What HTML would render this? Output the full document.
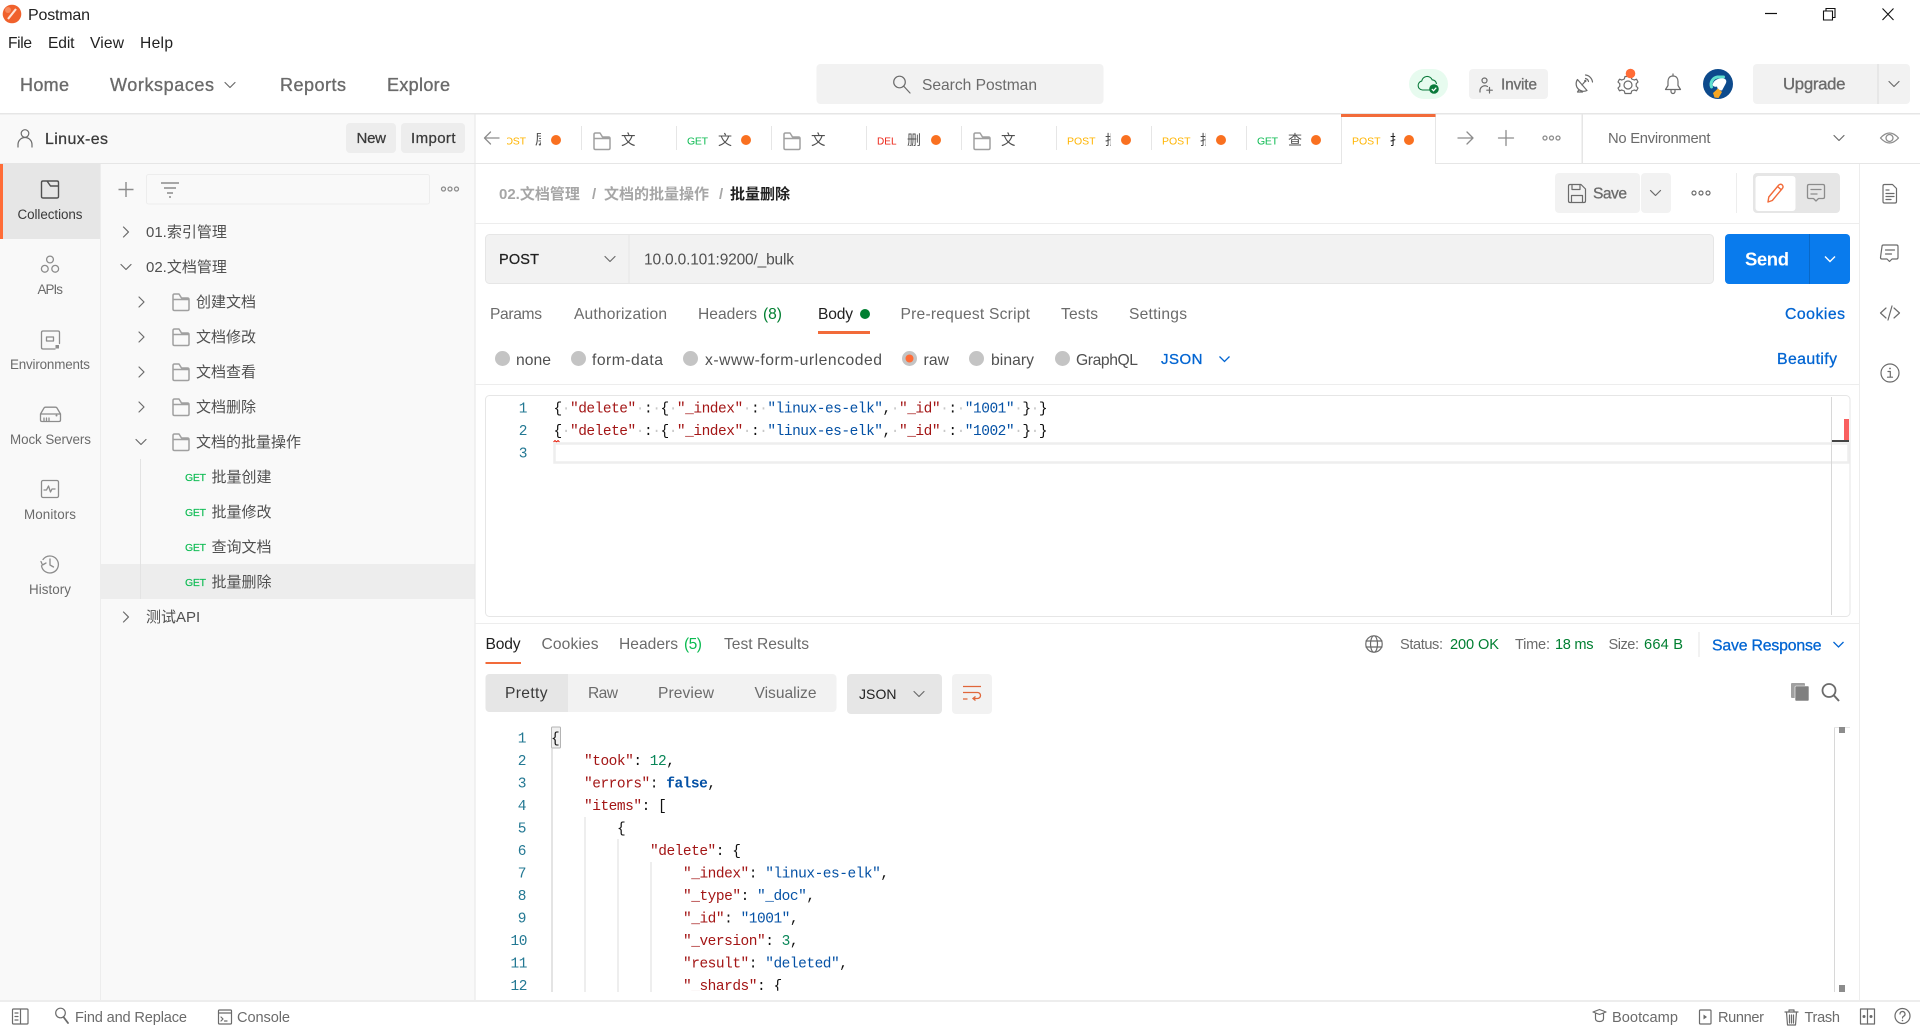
<!DOCTYPE html>
<html lang="zh"><head><meta charset="utf-8"><title>Postman</title>
<style>
html,body{margin:0;padding:0;background:#fff;width:1920px;height:1030px;overflow:hidden}
svg{display:block}
text{font-family:"Liberation Sans","Noto Sans CJK SC",sans-serif;font-size:15px;fill:#505050}
.g{fill:#6b6b6b;font-size:15.600px}.d{fill:#212121;font-size:15.600px}.r{font-size:15.700px}
.l{fill:#a6a6a6;font-weight:700}.lb{fill:#212121;font-weight:700}
.nav{font-size:18px;fill:#6b6b6b;stroke:#6b6b6b;stroke-width:.35}
.sn{font-size:13.400px;fill:#6b6b6b}
.st{font-size:14.600px;fill:#6b6b6b}
.bd{font-size:16px;fill:#212121;stroke:#212121;stroke-width:.25}
.blue{fill:#0265d2;stroke:#0265d2;stroke-width:.3;font-size:15.800px}
.gn{fill:#007f31;font-size:15.600px}.gl{fill:#0cbb52;font-size:15.600px}
.get{font-size:10.500px;fill:#0cbb52;stroke:#0cbb52;stroke-width:.15}
.pst{font-size:10.500px;fill:#ffb400}.gt{font-size:10.500px;fill:#0cbb52}.dl{font-size:10px;fill:#eb2013}
.m{font-family:"Liberation Mono","Noto Sans CJK SC",monospace;font-size:14.500px;letter-spacing:-.48px;fill:#111}
.k{fill:#a31515}.v{fill:#0451a5}.w{fill:#c8c8c8}.n{fill:#098658}.b{fill:#0451a5;font-weight:700}
.ln{font-family:"Liberation Mono",monospace;font-size:14.500px;letter-spacing:-.48px;fill:#237893;text-anchor:end}
.i{fill:none;stroke:#6b6b6b;stroke-width:1.200;stroke-linecap:round;stroke-linejoin:round}
.il{fill:none;stroke:#8c8c8c;stroke-width:1.300;stroke-linecap:round;stroke-linejoin:round}
.f{fill:none;stroke:#a0a0a0;stroke-width:1.500;stroke-linejoin:round}
</style></head><body>
<svg xmlns="http://www.w3.org/2000/svg" width="1920" height="1030" viewBox="0 0 1920 1030">
<defs>
<symbol id="folder" viewBox="0 0 18 18" overflow="visible"><path d="M1 2.500q0-1.500 1.500-1.500h4.500l2.500 4h6q1.500 0 1.500 1.500v9.500q0 1.500-1.500 1.500h-13q-1.500 0-1.500-1.500zM1 6.500h16" class="f"/></symbol>
</defs>
<rect width="1920" height="1030" fill="#fff"/>

<!-- title bar -->
<circle cx="12" cy="14" r="9.300" fill="#f0612c"/><path d="M8 19l8-10" stroke="#ffe3d6" stroke-width="2.200" fill="none"/><circle cx="8" cy="10" r="3" fill="#f78a5e"/>
<text x="28" y="20" textLength="62" style="fill:#222;font-size:16px">Postman</text>
<text x="8" y="48" textLength="24" class="d">File</text>
<text x="48" y="48" textLength="26.500" class="d">Edit</text>
<text x="90" y="48" textLength="34" class="d">View</text>
<text x="140" y="48" textLength="33" class="d">Help</text>
<path d="M1765 13.500h12" stroke="#111" stroke-width="1.200"/>
<path d="M1823.500 11h9v9h-9zM1826 11V8.500h9v9h-2.500" fill="none" stroke="#111" stroke-width="1.100"/>
<path d="M1882.500 8.500l11 11.500M1893.500 8.500l-11 11.500" stroke="#111" stroke-width="1.100"/>

<!-- header nav -->
<text x="20" y="91" textLength="49" class="nav">Home</text>
<text x="110" y="91" textLength="104" class="nav">Workspaces</text>
<path d="M225 82.500l5 5 5-5" class="i"/>
<text x="280" y="91" textLength="66" class="nav">Reports</text>
<text x="387" y="91" textLength="63" class="nav">Explore</text>
<rect x="816.500" y="64" width="287" height="40" rx="4" fill="#f2f2f2"/>
<circle cx="899.500" cy="82" r="5.800" class="i"/><path d="M904 86.500l6 6.500" class="i"/>
<text x="922" y="89.800" textLength="115" class="g">Search Postman</text>

<rect x="1409" y="69" width="39" height="30" rx="15" fill="#e7fbef"/>
<path d="M1432 90h-9.500a4.500 4.500 0 0 1-.8-8.900 5.500 5.500 0 0 1 10.500-1.300 4.500 4.500 0 0 1 4.300 4.200" fill="none" stroke="#0a7a3b" stroke-width="1.100"/>
<circle cx="1434" cy="89" r="4.800" fill="#0a7a3b"/><path d="M1431.800 89l1.700 1.700 2.800-3" stroke="#fff" stroke-width="1.200" fill="none"/>
<rect x="1469" y="69" width="79" height="30" rx="4" fill="#f2f2f2"/>
<circle cx="1484.500" cy="80.500" r="2.500" class="i"/><path d="M1480 92v-2a5 5 0 0 1 7.500-3.500M1489.500 87.500v5.500M1486.800 90.200h5.500" class="i"/>
<text x="1501" y="89.300" textLength="36" class="g" style="stroke:#6b6b6b;stroke-width:.3">Invite</text>
<path d="M1577.500 79.500a7.500 7.500 0 0 0 9.500 11zM1582 85l3-3.500M1578.500 90.500l-1 1.500h5" class="i"/><path d="M1585.500 78.500a4 4 0 0 1 3 3M1585.500 75a8 8 0 0 1 7 7" class="i"/><circle cx="1585.300" cy="81" r="1.200" fill="#6b6b6b"/>
<path d="M1625 76.500l-.7 2.500-2.500 1-2.300-.8-1.500 2.800 1.800 1.700v2.600l-1.800 1.700 1.500 2.800 2.300-.8 2.500 1 .7 2.500h6l.7-2.500 2.500-1 2.300.8 1.500-2.800-1.800-1.700v-2.600l1.800-1.700-1.500-2.800-2.300.8-2.500-1-.7-2.500z" class="i"/><circle cx="1628" cy="85" r="4" class="i"/>
<circle cx="1630.500" cy="73.500" r="4.800" fill="#ff6c37"/>
<path d="M1673 76c3.500 0 5 2.500 5 5.500v4l2.500 4h-15l2.500-4v-4c0-3 1.500-5.500 5-5.500zM1673 76v-2M1671 90v1.500a2 2 0 0 0 4 0V90" class="i"/>
<circle cx="1718" cy="84" r="15" fill="#0d4a8c"/>
<path d="M1711.500 87a7.500 7.500 0 0 1 6-10h6" fill="none" stroke="#5fe0cf" stroke-width="3" stroke-linecap="round"/><path d="M1712.500 85c1-5 6-7 11-6.500 3 .5 3.500 3 2 5.500l-3.500 6.500-4-.5-1-3.500q-3 1-4.500-1.500z" fill="#fff"/>
<path d="M1713 93l5-4.500 4 3.500-3.500 6-4-.5z" fill="#f6a623"/>
<rect x="1753" y="64" width="157" height="40" rx="4" fill="#f2f2f2"/><rect x="1877.500" y="64" width="1" height="40" fill="#dcdcdc"/>
<text x="1783" y="89.500" textLength="62.500" class="nav" style="font-size:16.800px">Upgrade</text>
<path d="M1889 81.500l5 5 5-5" class="i"/>

<!-- horizontal structure -->
<rect x="0" y="113" width="1920" height="1.500" fill="#e6e6e6"/>
<rect x="0" y="114.500" width="475" height="885.500" fill="#f9f9f9"/>
<rect x="0" y="163" width="1920" height="1" fill="#e6e6e6"/>
<rect x="100" y="164" width="1" height="836" fill="#ededed"/>
<rect x="474.500" y="114" width="1" height="886" fill="#e6e6e6"/>
<rect x="1859" y="164" width="1" height="836" fill="#ededed"/>

<!-- workspace header -->
<circle cx="25" cy="133.500" r="3.800" class="i"/><path d="M18 147v-2.500a7 7 0 0 1 14 0v2.500" class="i"/>
<text x="45" y="143.800" textLength="63" class="bd" style="fill:#3a3a3a;stroke:#3a3a3a">Linux-es</text>
<rect x="346" y="123" width="50" height="30" rx="4" fill="#ededed"/>
<text x="356.500" y="143" textLength="29.500" class="bd" style="font-size:15px;fill:#3a3a3a;stroke:#3a3a3a">New</text>
<rect x="401" y="123" width="64" height="30" rx="4" fill="#ededed"/>
<text x="411" y="143" textLength="44.500" class="bd" style="font-size:15px;fill:#3a3a3a;stroke:#3a3a3a">Import</text>

<!-- left nav -->
<rect x="0" y="164" width="100" height="75" fill="#e6e6e6"/><rect x="0" y="164" width="3" height="75" fill="#ff6c37"/>
<path d="M41.500 182.500q0-1.500 1.500-1.500h14q1.500 0 1.500 1.500v14q0 1.500-1.500 1.500h-14q-1.500 0-1.500-1.500zM47 181l3.500 5h8" fill="none" stroke="#505050" stroke-width="1.400" stroke-linejoin="round"/>
<text x="17.500" y="219" textLength="65" class="sn" style="fill:#3a3a3a">Collections</text>
<circle cx="50" cy="259.500" r="3.400" class="il"/><circle cx="44.800" cy="268.800" r="3.400" class="il"/><circle cx="55.200" cy="268.800" r="3.400" class="il"/>
<text x="37.500" y="294" textLength="25.500" class="sn">APIs</text>
<path d="M55 349h-12q-1.500 0-1.500-1.500v-15q0-1.500 1.500-1.500h15q1.500 0 1.500 1.500v11" class="il"/><rect x="46.500" y="337" width="7" height="4" class="il"/><rect x="55.500" y="345" width="3.500" height="3.500" fill="#8c8c8c"/>
<text x="10" y="369" textLength="80" class="sn">Environments</text>
<path d="M40.500 414v6q0 1.500 1.500 1.500h17q1.500 0 1.500-1.500v-6l-3.500-6q-.5-.8-1.500-.8h-10q-1 0-1.500.8zM40.500 414h20M44 421v-3M46.500 421v-3M49 421v-3" class="il"/><circle cx="56.500" cy="415.500" r="1" fill="#8c8c8c"/>
<text x="10" y="444" textLength="81" class="sn">Mock Servers</text>
<rect x="41.500" y="480.500" width="17" height="17" rx="1.500" class="il"/><path d="M44 490h2.500l2-4 2 6 1.500-3h3" class="il"/>
<text x="24" y="519" textLength="52" class="sn">Monitors</text>
<path d="M43 559.500a8.500 8.500 0 1 1-1.500 6.300M41 561.500l1.500 3.500 3.500-2M50 559v6l3.500 2" class="il"/>
<text x="29" y="594" textLength="42" class="sn">History</text>

<!-- collection toolbar -->
<path d="M126 182v15M118.500 189.500h15" stroke="#8c8c8c" stroke-width="1.400" fill="none"/>
<rect x="146.500" y="174.500" width="283" height="29.500" rx="2" fill="#f9f9f9" stroke="#ededed"/>
<path d="M161 183h18M164 188h12M167 193h6M169 197h2" stroke="#8c8c8c" stroke-width="1.400" fill="none"/>
<circle cx="443.500" cy="189" r="2" class="il"/><circle cx="450" cy="189" r="2" class="il"/><circle cx="456.500" cy="189" r="2" class="il"/>

<!-- tree -->
<path d="M123.500 227l5 5-5 5" class="i"/>
<text x="146" y="236.800">01.索引管理</text>
<path d="M121 264.500l5 5 5-5" class="i"/>
<text x="146" y="271.800">02.文档管理</text>
<path d="M139 297l5 5-5 5" class="i"/><use href="#folder" x="172" y="293" width="18" height="18"/><text x="196" y="306.800">创建文档</text>
<path d="M139 332l5 5-5 5" class="i"/><use href="#folder" x="172" y="328" width="18" height="18"/><text x="196" y="341.800">文档修改</text>
<path d="M139 367l5 5-5 5" class="i"/><use href="#folder" x="172" y="363" width="18" height="18"/><text x="196" y="376.800">文档查看</text>
<path d="M139 402l5 5-5 5" class="i"/><use href="#folder" x="172" y="398" width="18" height="18"/><text x="196" y="411.800">文档删除</text>
<path d="M136 439.500l5 5 5-5" class="i"/><use href="#folder" x="172" y="433" width="18" height="18"/><text x="196" y="446.800">文档的批量操作</text>
<rect x="100.500" y="564" width="374" height="35" fill="#ededed"/>
<rect x="140" y="459" width="1" height="140" fill="#e3e3e3"/>
<text x="185" y="481" textLength="21" class="get">GET</text><text x="211.500" y="481.800">批量创建</text>
<text x="185" y="516" textLength="21" class="get">GET</text><text x="211.500" y="516.800">批量修改</text>
<text x="185" y="551" textLength="21" class="get">GET</text><text x="211.500" y="551.800">查询文档</text>
<text x="185" y="586" textLength="21" class="get">GET</text><text x="211.500" y="586.800">批量删除</text>
<path d="M123.500 612l5 5-5 5" class="i"/>
<text x="146" y="621.800">测试API</text>

<!-- tab strip -->
<path d="M499 138h-14M490.500 132l-6 6 6 6" class="il"/>
<svg x="507" y="128" width="19" height="22" overflow="hidden"><text x="-9" y="16.500" textLength="28" class="pst">POST</text></svg>
<svg x="535" y="128" width="6" height="22" overflow="hidden"><text x="0" y="16.500" style="font-size:14px">层</text></svg>
<circle cx="556" cy="140" r="5" fill="#f97020"/>
<rect x="581" y="126" width="1" height="24" fill="#e6e6e6"/>
<use href="#folder" x="593" y="132" width="18" height="18"/><text x="621" y="145" style="font-size:14.500px">文</text>
<rect x="676" y="126" width="1" height="24" fill="#e6e6e6"/>
<text x="687" y="144.500" textLength="21" class="gt">GET</text><text x="718" y="145" style="font-size:14px">文</text><circle cx="746" cy="140" r="5" fill="#f97020"/>
<rect x="771" y="126" width="1" height="24" fill="#e6e6e6"/>
<use href="#folder" x="783" y="132" width="18" height="18"/><text x="811" y="145" style="font-size:14.500px">文</text>
<rect x="866" y="126" width="1" height="24" fill="#e6e6e6"/>
<text x="877" y="144.500" textLength="19.500" class="dl">DEL</text><text x="907" y="145" style="font-size:14px">删</text><circle cx="936" cy="140" r="5" fill="#f97020"/>
<rect x="961" y="126" width="1" height="24" fill="#e6e6e6"/>
<use href="#folder" x="973" y="132" width="18" height="18"/><text x="1001" y="145" style="font-size:14.500px">文</text>
<rect x="1056" y="126" width="1" height="24" fill="#e6e6e6"/>
<text x="1067" y="144.500" textLength="28.500" class="pst">POST</text>
<svg x="1105" y="128" width="6" height="22" overflow="hidden"><text x="0" y="17" style="font-size:14px">批</text></svg>
<circle cx="1126" cy="140" r="5" fill="#f97020"/>
<rect x="1151" y="126" width="1" height="24" fill="#e6e6e6"/>
<text x="1162" y="144.500" textLength="28.500" class="pst">POST</text>
<svg x="1200" y="128" width="6" height="22" overflow="hidden"><text x="0" y="17" style="font-size:14px">批</text></svg>
<circle cx="1221" cy="140" r="5" fill="#f97020"/>
<rect x="1246" y="126" width="1" height="24" fill="#e6e6e6"/>
<text x="1257" y="144.500" textLength="21" class="gt">GET</text><text x="1288" y="145" style="font-size:14px">查</text><circle cx="1316" cy="140" r="5" fill="#f97020"/>
<rect x="1341" y="114" width="95" height="50" fill="#fff"/><rect x="1341" y="114" width="1" height="50" fill="#e6e6e6"/><rect x="1435" y="114" width="1" height="50" fill="#e6e6e6"/><rect x="1341" y="114" width="94.500" height="3" fill="#f26b3a"/>
<text x="1352" y="144.500" textLength="28.500" class="pst">POST</text>
<svg x="1390" y="128" width="5.500" height="22" overflow="hidden"><text x="0" y="17" style="font-size:14px;fill:#212121">批</text></svg>
<circle cx="1409" cy="140" r="5" fill="#f97020"/>
<path d="M1458 138h15M1467 132l6 6-6 6" class="il"/>
<path d="M1506 130.500v15M1498.500 138h15" class="il"/>
<circle cx="1545" cy="138" r="2" class="il"/><circle cx="1551.500" cy="138" r="2" class="il"/><circle cx="1558" cy="138" r="2" class="il"/>
<rect x="1581.500" y="114" width="1.500" height="50" fill="#e6e6e6"/>
<text x="1608" y="143" textLength="102.500" class="g" style="font-size:14.800px">No Environment</text>
<path d="M1834 135.500l5 5 5-5" class="i"/>
<path d="M1880.500 138q9-10 18 0q-9 10-18 0z" class="il"/><circle cx="1889.500" cy="138" r="3.500" class="il"/>

<!-- breadcrumb -->
<text x="499" y="199" class="l">02.文档管理</text>
<text x="592" y="199" class="l">/</text>
<text x="604" y="199" class="l">文档的批量操作</text>
<text x="719" y="199" class="l">/</text>
<text x="730" y="199" class="lb">批量删除</text>
<rect x="475" y="223" width="1384" height="1" fill="#ededed"/>

<rect x="1555" y="173" width="85" height="40" rx="4" fill="#f2f2f2"/><rect x="1641" y="173" width="30" height="40" rx="4" fill="#f2f2f2"/>
<path d="M1568.500 186q0-1.500 1.500-1.500h11l4.500 4.500v12q0 1.500-1.500 1.500h-14q-1.500 0-1.500-1.500zM1572 184.500v5h8v-5M1571.500 202.500v-7h11v7" class="i"/>
<text x="1593" y="198.500" textLength="34" class="g" style="stroke:#6b6b6b;stroke-width:.3">Save</text>
<path d="M1650.500 190.500l5 5 5-5" class="i"/>
<circle cx="1694" cy="193" r="2" class="i"/><circle cx="1701" cy="193" r="2" class="i"/><circle cx="1708" cy="193" r="2" class="i"/>
<rect x="1736" y="173" width="1" height="40" fill="#ededed"/>
<rect x="1753" y="173" width="87" height="40" rx="4" fill="#e6e6e6"/><rect x="1755.500" y="176" width="40" height="35" rx="3" fill="#fff"/>
<path d="M1768 202l.8-5 10-12q2-1.500 3.500 0 1.500 2 0 3.500l-10 12zM1777.500 186.500l4 3.500" fill="none" stroke="#f26b3a" stroke-width="1.400" stroke-linejoin="round"/>
<path d="M1807.500 186q0-1.500 1.500-1.500h14q1.500 0 1.500 1.500v11q0 1.500-1.500 1.500h-4.500l-2.500 2.500-2.500-2.500h-4.500q-1.500 0-1.500-1.500zM1811 189.500h10M1811 194h6" class="il"/>

<!-- right rail -->
<path d="M1883 186q0-1.500 1.500-1.500h8l4 4v13q0 1.500-1.500 1.500h-10.500q-1.500 0-1.500-1.500zM1886 190h3M1886 193.500h8M1886 196.500h8M1886 199.500h5" class="i"/>
<path d="M1882 246.500q0-1.500 1.500-1.500h13q1.500 0 1.500 1.500v11q0 1.500-1.500 1.500h-4.500l-2.500 2.500-2.500-2.500h-5q-1.500 0-1.500-1.500zM1885.500 250h9M1885.500 254h6" class="i"/>
<path d="M1886 308l-5.500 5 5.500 5M1894 308l5.500 5-5.500 5M1892 306l-4 14" class="i"/>
<circle cx="1890" cy="373" r="9" class="i"/><path d="M1888 371.500h2.300v5.500M1887.500 377.200h5" class="i"/><circle cx="1890" cy="368.500" r=".9" fill="#6b6b6b"/>

<!-- url bar -->
<rect x="485.500" y="234.500" width="1228" height="49" rx="4" fill="#f2f2f2" stroke="#e6e6e6"/>
<rect x="628.500" y="235" width="1" height="48" fill="#e6e6e6"/>
<text x="499" y="264" textLength="40" class="bd" style="font-size:14.500px">POST</text>
<path d="M605 256.500l5 5 5-5" class="i"/>
<text x="644" y="264.500" textLength="150" style="font-size:15.500px">10.0.0.101:9200/_bulk</text>
<rect x="1725" y="234" width="125" height="50" rx="4" fill="#097bed"/>
<rect x="1809" y="234" width="1" height="50" fill="#0868c8"/>
<text x="1745" y="265.500" textLength="44" style="fill:#fff;font-weight:700;font-size:18.500px">Send</text>
<path d="M1825 256.500l5 5 5-5" fill="none" stroke="#fff" stroke-width="1.400"/>

<!-- request tabs -->
<text x="490" y="319" textLength="52" class="g">Params</text>
<text x="574" y="319" textLength="93" class="g">Authorization</text>
<text x="698" y="319" textLength="59" class="g">Headers</text>
<text x="763" y="319" textLength="19" class="gn">(8)</text>
<text x="818" y="319" textLength="35" class="d">Body</text>
<circle cx="865" cy="314" r="5" fill="#007f31"/>
<rect x="818" y="331" width="52" height="3" fill="#f26b3a"/>
<text x="900.500" y="319" textLength="129.500" class="g">Pre-request Script</text>
<text x="1061" y="319" textLength="37" class="g">Tests</text>
<text x="1129" y="319" textLength="58" class="g">Settings</text>
<text x="1785" y="319" textLength="60" class="blue">Cookies</text>

<!-- radios -->
<circle cx="502.500" cy="358.500" r="7.500" fill="#c4c4c4"/><text x="516" y="365" textLength="35" class="r">none</text>
<circle cx="578.500" cy="358.500" r="7.500" fill="#c4c4c4"/><text x="592" y="365" textLength="71" class="r">form-data</text>
<circle cx="690.500" cy="358.500" r="7.500" fill="#c4c4c4"/><text x="705" y="365" textLength="177" class="r">x-www-form-urlencoded</text>
<circle cx="909.500" cy="358.500" r="7.500" fill="#c4c4c4"/><circle cx="909.500" cy="358.500" r="4" fill="#ff6c37"/><text x="923.500" y="365" textLength="25.500" class="r">raw</text>
<circle cx="976.500" cy="358.500" r="7.500" fill="#c4c4c4"/><text x="991" y="365" textLength="43" class="r">binary</text>
<circle cx="1062.500" cy="358.500" r="7.500" fill="#c4c4c4"/><text x="1076" y="365" textLength="62" class="r">GraphQL</text>
<text x="1161" y="364" textLength="41.500" class="blue" style="font-size:15px">JSON</text>
<path d="M1219.500 356.500l5 5 5-5" fill="none" stroke="#0265d2" stroke-width="1.300"/>
<text x="1777" y="364" textLength="60" class="blue">Beautify</text>
<rect x="475" y="384" width="1384" height="1" fill="#ededed"/>

<!-- request editor -->
<rect x="485.500" y="395.500" width="1364.500" height="221" rx="4" fill="#fff" stroke="#e6e6e6"/>
<text x="527" y="412.700" class="ln">1</text><text x="527" y="435.200" class="ln">2</text><text x="527" y="457.700" class="ln">3</text>
<text class="m" x="553.500" y="412.700">{<tspan class="w">·</tspan><tspan class="k">"delete"</tspan><tspan class="w">·</tspan>:<tspan class="w">·</tspan>{<tspan class="w">·</tspan><tspan class="k">"_index"</tspan><tspan class="w">·</tspan>:<tspan class="w">·</tspan><tspan class="v">"linux-es-elk"</tspan>,<tspan class="w">·</tspan><tspan class="k">"_id"</tspan><tspan class="w">·</tspan>:<tspan class="w">·</tspan><tspan class="v">"1001"</tspan><tspan class="w">·</tspan>}<tspan class="w">·</tspan>}</text>
<text class="m" x="553.500" y="435.200">{<tspan class="w">·</tspan><tspan class="k">"delete"</tspan><tspan class="w">·</tspan>:<tspan class="w">·</tspan>{<tspan class="w">·</tspan><tspan class="k">"_index"</tspan><tspan class="w">·</tspan>:<tspan class="w">·</tspan><tspan class="v">"linux-es-elk"</tspan>,<tspan class="w">·</tspan><tspan class="k">"_id"</tspan><tspan class="w">·</tspan>:<tspan class="w">·</tspan><tspan class="v">"1002"</tspan><tspan class="w">·</tspan>}<tspan class="w">·</tspan>}</text>
<path d="M553.500 442l1.500-1.500 1.500 1.500 1.500-1.500 1.500 1.500" stroke="#e51400" fill="none" stroke-width=".9"/>
<rect x="554.500" y="443.500" width="1294" height="19" fill="none" stroke="#eee" stroke-width="2.500"/>
<rect x="1831" y="397" width="1" height="218" fill="#d8d8d8"/>
<rect x="1844" y="419" width="5" height="21" fill="#f95f5f"/>
<rect x="1832" y="440" width="17" height="2" fill="#444"/>

<!-- response header -->
<rect x="475" y="623" width="1384" height="1" fill="#ededed"/>
<text x="485.500" y="649" textLength="35" class="d">Body</text>
<rect x="485.500" y="662" width="35.500" height="2" fill="#f26b3a"/>
<text x="541.500" y="649" textLength="57" class="g">Cookies</text>
<text x="619" y="649" textLength="59" class="g">Headers</text>
<text x="684" y="649" textLength="18" class="gl">(5)</text>
<text x="724" y="649" textLength="85" class="g">Test Results</text>
<circle cx="1374" cy="644" r="8.200" class="i"/><ellipse cx="1374" cy="644" rx="3.500" ry="8.200" class="i"/><path d="M1366 641h16M1366 647h16" class="i"/>
<text x="1400" y="649" textLength="43" class="st">Status:</text>
<text x="1450" y="649" textLength="49" class="gn" style="font-size:14.600px">200 OK</text>
<text x="1515" y="649" textLength="35" class="st">Time:</text>
<text x="1555" y="649" textLength="38.500" class="gn" style="font-size:14.600px">18 ms</text>
<text x="1608.500" y="649" textLength="30.500" class="st">Size:</text>
<text x="1644" y="649" textLength="39" class="gn" style="font-size:14.600px">664 B</text>
<rect x="1698.500" y="632" width="1" height="25" fill="#e6e6e6"/>
<text x="1712" y="650.500" textLength="109.500" class="blue">Save Response</text>
<path d="M1833.500 642l5 5 5-5" fill="none" stroke="#0265d2" stroke-width="1.300"/>

<!-- response toolbar -->
<rect x="485.500" y="674" width="351" height="38" rx="4" fill="#f2f2f2"/>
<path d="M489.500 674h78.500v38h-78.500a4 4 0 0 1-4-4v-30a4 4 0 0 1 4-4z" fill="#e6e6e6"/>
<text x="505" y="698" textLength="42.500" class="d" style="fill:#3a3a3a">Pretty</text>
<text x="588" y="698" textLength="30" class="g">Raw</text>
<text x="658" y="698" textLength="56" class="g">Preview</text>
<text x="754.500" y="698" textLength="62" class="g">Visualize</text>
<rect x="847" y="674" width="95" height="40" rx="4" fill="#e6e6e6"/>
<text x="859" y="699" textLength="37.500" class="d" style="font-size:14px">JSON</text>
<path d="M914 691.500l5 5 5-5" class="i"/>
<rect x="952" y="674" width="40" height="40" rx="4" fill="#f2f2f2"/>
<path d="M963 686.500h18M963 692.500h14.500a3 3 0 0 1 0 6h-4M975.500 696.500l-2.500 2 2.500 2M963 699h4.500" fill="none" stroke="#e0663a" stroke-width="1.300"/>
<rect x="1791" y="683" width="14" height="15" rx="1" fill="#a0a0a0"/><rect x="1795" y="686" width="14" height="15" rx="1" fill="#808080" stroke="#fff" stroke-width=".6"/>
<circle cx="1829" cy="690.500" r="6.500" fill="none" stroke="#6b6b6b" stroke-width="1.800"/><path d="M1834 695.500l5 5.500" stroke="#6b6b6b" stroke-width="2" fill="none"/>

<!-- response code -->
<rect x="551.500" y="727" width="9" height="21" rx="1" fill="#f0f0f0" stroke="#b4b4b4"/>
<g fill="#dcdcdc"><rect x="551.500" y="748" width="1" height="244" fill="#c8c8c8"/><rect x="584.500" y="817" width="1" height="175"/><rect x="617.500" y="839" width="1" height="153"/><rect x="650.500" y="862" width="1" height="130"/></g>
<text x="526" y="742.700" class="ln">1</text><text x="526" y="765.200" class="ln">2</text><text x="526" y="787.700" class="ln">3</text><text x="526" y="810.200" class="ln">4</text><text x="526" y="832.700" class="ln">5</text><text x="526" y="855.200" class="ln">6</text><text x="526" y="877.700" class="ln">7</text><text x="526" y="900.200" class="ln">8</text><text x="526" y="922.700" class="ln">9</text><text x="527" y="945.200" class="ln">10</text><text x="527" y="967.700" class="ln">11</text><text x="527" y="990.200" class="ln">12</text>
<text class="m" x="551" y="742.700">{</text>
<text class="m" x="584" y="765.200"><tspan class="k">"took"</tspan>: <tspan class="n">12</tspan>,</text>
<text class="m" x="584" y="787.700"><tspan class="k">"errors"</tspan>: <tspan class="b">false</tspan>,</text>
<text class="m" x="584" y="810.200"><tspan class="k">"items"</tspan>: [</text>
<text class="m" x="617" y="832.700">{</text>
<text class="m" x="650" y="855.200"><tspan class="k">"delete"</tspan>: {</text>
<text class="m" x="683" y="877.700"><tspan class="k">"_index"</tspan>: <tspan class="v">"linux-es-elk"</tspan>,</text>
<text class="m" x="683" y="900.200"><tspan class="k">"_type"</tspan>: <tspan class="v">"_doc"</tspan>,</text>
<text class="m" x="683" y="922.700"><tspan class="k">"_id"</tspan>: <tspan class="v">"1001"</tspan>,</text>
<text class="m" x="683" y="945.200"><tspan class="k">"_version"</tspan>: <tspan class="n">3</tspan>,</text>
<text class="m" x="683" y="967.700"><tspan class="k">"result"</tspan>: <tspan class="v">"deleted"</tspan>,</text>
<svg x="0" y="975" width="1830" height="15.800" overflow="hidden"><text class="m" x="683" y="15.200"><tspan class="k">"_shards"</tspan>: {</text></svg>
<rect x="1834" y="727" width="1" height="265" fill="#d8d8d8"/><rect x="1834" y="727" width="16" height="1" fill="#e6e6e6"/>
<rect x="1839" y="727" width="6" height="6" fill="#8c8c8c"/><rect x="1839" y="985" width="6" height="7" fill="#8c8c8c"/>

<!-- status bar -->
<rect x="0" y="1000" width="1920" height="2" fill="#ededed"/>
<path d="M12.500 1010q0-1 1-1h13.500q1 0 1 1v13q0 1-1 1h-13.500q-1 0-1-1zM20.500 1009v15M15 1013h3M15 1016.500h3M15 1020h3" class="i"/>
<circle cx="60.500" cy="1013" r="4.800" class="i"/><path d="M63.500 1017l4.500 6" class="i" style="stroke-width:1.800"/>
<text x="75" y="1022" textLength="112" class="st">Find and Replace</text>
<path d="M218.500 1011q0-1 1-1h11q1 0 1 1v12q0 1-1 1h-11q-1 0-1-1zM218.500 1013h13M221 1017l2 2-2 2M224.500 1021h2.500" class="i"/>
<text x="237" y="1022" textLength="53" class="st">Console</text>
<path d="M1593 1012l6.500-2.500 6.500 2.500-6.500 2.500zM1595.500 1013.500v5q0 3 4 3t4-3v-5" class="i"/>
<text x="1612" y="1022" textLength="66" class="st">Bootcamp</text>
<rect x="1699.500" y="1010" width="11.500" height="14" rx="1" class="i"/><path d="M1703.500 1014.500l3.500 2.500-3.500 2.500z" fill="#6b6b6b"/>
<text x="1718" y="1022" textLength="46" class="st">Runner</text>
<path d="M1785 1012h13M1789 1012v-2h5v2M1786.500 1012l1 13h8l1-13M1789.500 1015v8M1791.500 1015v8M1793.500 1015v8" class="i"/>
<text x="1804.500" y="1022" textLength="35.500" class="st">Trash</text>
<rect x="1860.500" y="1009" width="14" height="15" class="i"/><path d="M1867.500 1009v15" class="i"/><circle cx="1864" cy="1016.500" r="1.500" fill="#6b6b6b"/><circle cx="1871" cy="1016.500" r="1.500" fill="#6b6b6b"/>
<circle cx="1902.500" cy="1016" r="7.500" class="i"/><path d="M1900 1014a2.500 2.500 0 1 1 3.500 2.300q-1 .5-1 1.700" class="i"/><circle cx="1902.500" cy="1020.500" r=".8" fill="#6b6b6b"/>
</svg>
</body></html>
